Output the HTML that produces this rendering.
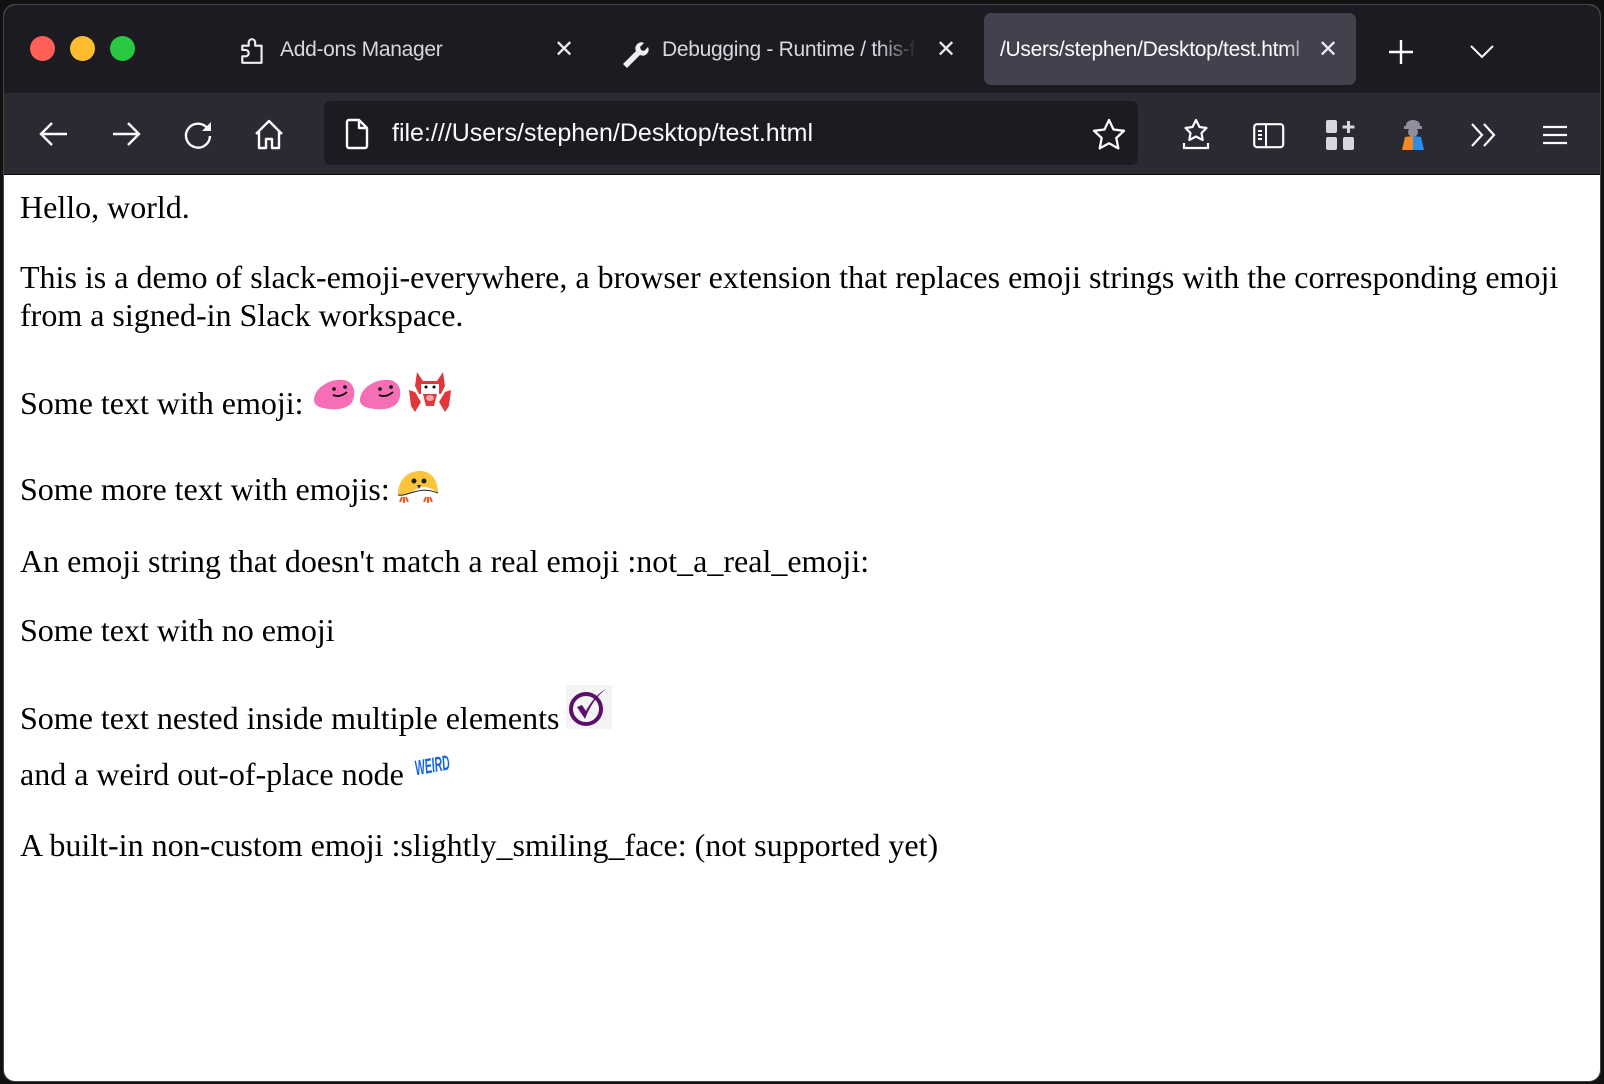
<!DOCTYPE html>
<html><head><meta charset="utf-8"><style>
*{margin:0;padding:0;box-sizing:border-box}
body{width:1604px;height:1084px;background:#111;position:relative;overflow:hidden;font-family:"Liberation Sans",sans-serif}
#win{position:absolute;left:3px;top:4px;width:1598px;height:1078px;border-radius:12px;overflow:hidden;background:#fff;border:1px solid #444}
#tabs{position:absolute;left:0;top:0;width:100%;height:88px;background:#1c1b22}
#tb{position:absolute;left:0;top:88px;width:100%;height:81px;background:#2b2a33}
.a{position:absolute}
.dot{position:absolute;width:25px;height:25px;border-radius:50%;top:31px}
.tt{position:absolute;top:33px;font-size:21px;color:#d7d7de;white-space:nowrap;letter-spacing:-0.3px}
.x{position:absolute;top:30px;font-size:24px;color:#e8e8ee}
svg{position:absolute;overflow:visible}
.c{position:absolute;left:16px;font-family:"Liberation Serif",serif;font-size:32px;color:#000;line-height:38px;white-space:nowrap}
</style></head><body>
<div id="win">
<div id="tabs">
 <div class="dot" style="left:26px;background:#fe5f57"></div>
 <div class="dot" style="left:66px;background:#febc2e"></div>
 <div class="dot" style="left:106px;background:#28c840"></div>
 <svg style="left:234px;top:28px" width="30" height="36" viewBox="0 0 28 30"><path d="M4 10h6v-3a3 3 0 0 1 6 0v3h6v16h-18v-6h3a3 3 0 0 0 0-6h-3z" fill="none" stroke="#eee" stroke-width="2" stroke-linejoin="round"/></svg>
 <div class="tt" style="left:276px">Add-ons Manager</div>
 <div class="x" style="left:550px">✕</div>
 <svg style="left:616px;top:32px" width="28" height="30" viewBox="0 0 28 30"><path d="M3 27l13-13a6 6 0 0 1 8-8l-4 4 1 3 3 1 4-4a6 6 0 0 1-8 8l-13 13z" fill="#eee"/></svg>
 <div class="tt" style="left:658px;width:255px;overflow:hidden;-webkit-mask-image:linear-gradient(90deg,#000 85%,transparent)">Debugging - Runtime / this-firefox</div>
 <div class="x" style="left:932px">✕</div>
 <div class="a" style="left:980px;top:8px;width:372px;height:72px;background:#42414d;border-radius:7px"></div>
 <div class="tt" style="left:996px;color:#fbfbfe;width:315px;overflow:hidden;-webkit-mask-image:linear-gradient(90deg,#000 90%,transparent)">/Users/stephen/Desktop/test.html</div>
 <div class="x" style="left:1314px">✕</div>
 <svg style="left:1384px;top:34px" width="26" height="26"><path d="M13 1v24M1 13h24" stroke="#fbfbfe" stroke-width="2.4"/></svg>
 <svg style="left:1466px;top:40px" width="24" height="14"><path d="M1 1l11 11 11-11" fill="none" stroke="#fbfbfe" stroke-width="2"/></svg>
</div>
<div id="tb">
 <svg style="left:36px;top:29px" width="28" height="24"><path d="M27 12H2M12 1L1 12l11 11" fill="none" stroke="#fbfbfe" stroke-width="2.4"/></svg>
 <svg style="left:108px;top:29px" width="28" height="24"><path d="M1 12h25M16 1l11 11-11 11" fill="none" stroke="#fbfbfe" stroke-width="2.4"/></svg>
 <svg style="left:180px;top:27px" width="30" height="30"><path d="M24 9A12 12 0 1 0 26 16" fill="none" stroke="#fbfbfe" stroke-width="2.4"/><path d="M27 2v9h-9z" fill="#fbfbfe"/></svg>
 <svg style="left:250px;top:26px" width="30" height="32"><path d="M2 15L15 2l13 13M5 12v17h7v-9h6v9h7V12" fill="none" stroke="#fbfbfe" stroke-width="2.4" stroke-linejoin="round"/></svg>
 <div class="a" style="left:320px;top:8px;width:814px;height:64px;background:#1c1b22;border-radius:7px"></div>
 <svg style="left:341px;top:26px" width="24" height="30"><path d="M2 3a2 2 0 0 1 2-2h10l8 8v18a2 2 0 0 1-2 2H4a2 2 0 0 1-2-2z M14 1v8h8" fill="none" stroke="#fbfbfe" stroke-width="2.4" stroke-linejoin="round"/></svg>
 <div class="a" style="left:388px;top:26px;font-size:25px;color:#fbfbfe">file:///Users/stephen/Desktop/test.html</div>
 <svg style="left:1088px;top:25px" width="34" height="32" viewBox="0 0 34 32"><path d="M17 2l4.5 9.5 10.5 1.3-7.7 7.2 2 10.4L17 25.3 7.7 30.4l2-10.4L2 12.8l10.5-1.3z" fill="none" stroke="#fbfbfe" stroke-width="2.3" stroke-linejoin="round"/></svg>
 <svg style="left:1178px;top:25px" width="28" height="32" viewBox="0 0 28 32"><path d="M14 2l3.5 7 7 1-5 5 1.2 7-6.7-3.5-6.7 3.5 1.2-7-5-5 7-1z" fill="none" stroke="#fbfbfe" stroke-width="2.2" stroke-linejoin="round"/><path d="M2 25v5h24v-5" fill="none" stroke="#fbfbfe" stroke-width="2.2"/></svg>
 <svg style="left:1249px;top:30px" width="32" height="26"><rect x="1.2" y="1.2" width="29" height="23" rx="3" fill="none" stroke="#fbfbfe" stroke-width="2.2"/><path d="M13 1v24M5 8h4M5 12h4M5 16h4" stroke="#fbfbfe" stroke-width="2"/></svg>
 <svg style="left:1322px;top:27px" width="30" height="30"><rect x="0" y="0" width="11" height="13" rx="2" fill="#d7d7de"/><rect x="0" y="17" width="11" height="13" rx="2" fill="#d7d7de"/><rect x="17" y="17" width="11" height="13" rx="2" fill="#d7d7de"/><path d="M22.5 1v12M16.5 7h12" stroke="#d7d7de" stroke-width="3"/></svg>
 <svg style="left:1394px;top:24px" width="30" height="34"><ellipse cx="15" cy="8" rx="7" ry="5" fill="#8f8f9d"/><rect x="6" y="9" width="18" height="3" fill="#8f8f9d"/><circle cx="15" cy="15" r="5" fill="#8f8f9d"/><path d="M4 33l3-13 8-1v14z" fill="#f08a24"/><path d="M15 19l8 1 3 13H15z" fill="#2a8ee8"/></svg>
 <svg style="left:1466px;top:30px" width="28" height="24"><path d="M2 1l10 11-10 11M14 1l10 11-10 11" fill="none" stroke="#fbfbfe" stroke-width="2.2"/></svg>
 <svg style="left:1538px;top:32px" width="26" height="20"><path d="M1 2h24M1 10h24M1 18h24" stroke="#fbfbfe" stroke-width="2.2"/></svg>
</div>
<div class="a" style="left:0;top:169px;width:100%;height:1px;background:#0c0c0d"></div>
</div>
<div class="c" style="left:20px;top:188px">Hello, world.</div>
<div class="c" style="left:20px;top:258px">This is a demo of slack-emoji-everywhere, a browser extension that replaces emoji strings with the corresponding emoji</div>
<div class="c" style="left:20px;top:296px">from a signed-in Slack workspace.</div>
<div class="c" style="left:20px;top:384px">Some text with emoji:</div>
<svg style="left:312px;top:376px" width="90" height="34" viewBox="0 0 90 34"><path d="M2 24C2 12 18 2 32 4c10 2 12 12 9 20-3 8-14 10-24 9C8 32 2 30 2 24z" fill="#f66eb5"/><circle cx="22" cy="13" r="1.8" fill="#000"/><circle cx="33" cy="11" r="1.8" fill="#000"/><path d="M21 19q7 3 14-3" fill="none" stroke="#000" stroke-width="1.8"/><g transform="translate(46 0)"><path d="M2 24C2 12 18 2 32 4c10 2 12 12 9 20-3 8-14 10-24 9C8 32 2 30 2 24z" fill="#f66eb5"/><circle cx="22" cy="13" r="1.8" fill="#000"/><circle cx="33" cy="11" r="1.8" fill="#000"/><path d="M21 19q7 3 14-3" fill="none" stroke="#000" stroke-width="1.8"/></g></svg>
<svg style="left:407px;top:370px" width="46" height="44" viewBox="0 0 46 44"><path d="M10 2l6 9h14l6-9 2 14-4 8h-22l-4-8z" fill="#e0383a"/><path d="M14 14h18v10H14z" fill="#fff"/><circle cx="19" cy="17" r="1.5"/><circle cx="27" cy="17" r="1.5"/><path d="M2 20l6 2 6 10-6 10-4-6zM44 20l-6 2-6 10 6 10 4-6z" fill="#e0383a"/><path d="M16 24h14l-3 12h-8z" fill="#e0383a"/><ellipse cx="23" cy="28" rx="4" ry="3" fill="#f6a2ae"/></svg>
<div class="c" style="left:20px;top:470px">Some more text with emojis:</div>
<svg style="left:394px;top:469px" width="48" height="36" viewBox="0 0 48 36"><path d="M4 26C4 10 14 2 26 2s18 10 18 22c-5-4-10-6-14-6-6 0-10 4-14 6-4 2-8 2-12 2z" fill="#fbc43a"/><circle cx="20" cy="12" r="2.5" fill="#222"/><circle cx="30" cy="12" r="2.5" fill="#222"/><path d="M23 16l2 4 2-4z" fill="#222"/><path d="M4 26c10 2 20-10 40-2" fill="none" stroke="#222" stroke-width="1"/><path d="M8 28l-2 5M10 28v6M12 28l2 5M32 28l-2 5M34 28v6M36 28l2 5" stroke="#f05a28" stroke-width="2"/></svg>
<div class="c" style="left:20px;top:542px">An emoji string that doesn't match a real emoji :not_a_real_emoji:</div>
<div class="c" style="left:20px;top:611px">Some text with no emoji</div>
<div class="c" style="left:20px;top:699px">Some text nested inside multiple elements</div>
<svg style="left:566px;top:685px" width="46" height="44" viewBox="0 0 46 44"><rect width="46" height="44" fill="#f4f4f4"/><circle cx="20" cy="24" r="15" fill="none" stroke="#5b0f6b" stroke-width="4"/><path d="M11 22l8 12 C24 20 32 10 40 4 c-8 4-16 14-20 22l-4-6z" fill="#5b0f6b"/></svg>
<div class="c" style="left:20px;top:755px">and a weird out-of-place node</div>
<svg style="left:414px;top:745px" width="40" height="32" viewBox="0 0 40 32"><text x="0" y="18" font-family="Liberation Sans" font-weight="bold" font-size="14" fill="#1462e0" transform="rotate(-10 20 16) scale(0.75 1.5)" font-style="italic">WEIRD</text></svg>
<div class="c" style="left:20px;top:826px">A built-in non-custom emoji :slightly_smiling_face: (not supported yet)</div>
</body></html>
